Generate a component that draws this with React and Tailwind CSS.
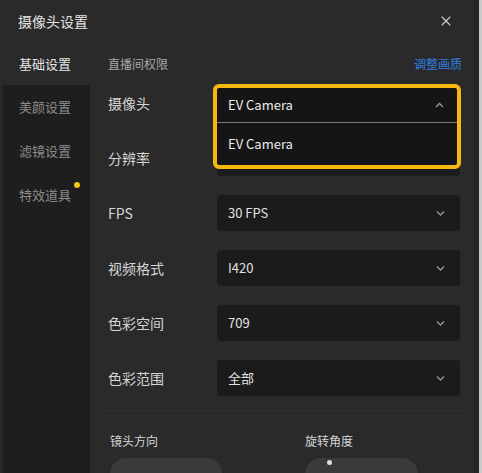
import { X } from "lucide-react";

const font = { fontFamily: '"Noto Sans CJK SC", "Noto Sans", sans-serif' };

const rows = [
  { label: "摄像头", value: "EV Camera", open: true },
  { label: "分辨率", value: "" },
  { label: "FPS", value: "30 FPS" },
  { label: "视频格式", value: "I420" },
  { label: "色彩空间", value: "709" },
  { label: "色彩范围", value: "全部" },
];

function Chevron({ up }) {
  return (
    <svg width="9" height="6" viewBox="0 0 9 6" className="text-[#9a9a9a]">
      <path
        d={up ? "M1 5 L4.5 1.5 L8 5" : "M1 1.5 L4.5 5 L8 1.5"}
        fill="none"
        stroke="currentColor"
        strokeWidth="1.3"
      />
    </svg>
  );
}

function SelectRow({ label, value, open }) {
  return (
    <div className="flex items-center h-9">
      <div className="w-[109px] text-[14px] text-[#d6d6d6]">{label}</div>
      <div className="relative w-[243px] h-9">
        {open ? (
          // opened: the list replaces the closed select
          <div className="absolute left-[-4px] top-[-1px] w-[248px] z-10 border-[4px] border-[#f6b80f] rounded-[6px] bg-[#151515]">
            <div className="h-[34px] flex items-center justify-between pl-[11px] pr-[13px] text-[13px] text-[#ececec]">
              <span>{value}</span>
              <Chevron up />
            </div>
            <div className="h-px bg-[#7a7a7a]" />
            <div className="h-[42px] flex items-center pl-[11px] text-[13px] text-[#ececec]">
              EV Camera
            </div>
          </div>
        ) : (
          <div className="h-9 rounded-[4px] bg-[#1b1b1b] flex items-center justify-between pl-[11px] pr-[15px] text-[13px] text-[#e2e2e2]">
            <span>{value}</span>
            <Chevron />
          </div>
        )}
      </div>
    </div>
  );
}

export default function App() {
  const side = ["基础设置", "美颜设置", "滤镜设置", "特效道具"];
  return (
    <div
      className="w-[482px] h-[473px] overflow-hidden bg-[#2a2a2a] flex"
      style={font}
    >
      <div className="flex-1 flex flex-col min-w-0">
        <div className="h-[42px] shrink-0 flex items-center justify-between pl-[18px] pr-[20px]">
          <span className="text-[14px] text-[#e4e4e4]">摄像头设置</span>
          <X size={16} strokeWidth={1.6} className="text-[#d0d0d0]" />
        </div>
        <div className="flex flex-1 min-h-0">
          <div className="w-[90px] shrink-0 flex flex-col">
            <div className="h-[43px] flex items-center pl-[19px] text-[13px] text-[#e8e8e8]">
              {side[0]}
            </div>
            <div className="flex-1 ml-[3px] bg-[#1e1e1e] flex flex-col">
              {side.slice(1).map((s, i) => (
                <div
                  key={s}
                  className="relative h-[44px] flex items-center pl-[16px] text-[13px] text-[#8c8c8c]"
                >
                  {s}
                  {i === 2 && (
                    <span className="absolute left-[71px] top-[9px] w-[6px] h-[6px] rounded-full bg-[#f5c518]" />
                  )}
                </div>
              ))}
            </div>
          </div>
          <div className="flex-1 pl-[18px] pr-[10px]">
            <div className="h-[21px] mt-[11px] flex items-center justify-between pr-[2px]">
              <span className="text-[12px] text-[#a8a8a8]">直播间权限</span>
              <span className="text-[12px] text-[#2f7fe0]">调整画质</span>
            </div>
            <div className="mt-[11px] flex flex-col gap-[19px]">
              {rows.map((r) => (
                <SelectRow key={r.label} {...r} />
              ))}
            </div>
            <div className="mt-[14px] ml-[-3px] h-px bg-[#323232]" />
            <div className="mt-[21px] flex pl-[2px]">
              <div className="w-[195px]">
                <div className="text-[12px] text-[#d6d6d6]">镜头方向</div>
                <div className="mt-[8px] w-[112px] h-[32px] rounded-full bg-[#3a3a3a]" />
              </div>
              <div>
                <div className="text-[12px] text-[#d6d6d6]">旋转角度</div>
                <div className="mt-[8px] w-[113px] h-[32px] rounded-full bg-[#3a3a3a] flex items-start pl-[22px] pt-[2px]">
                  <span className="w-[5px] h-[5px] rounded-full bg-[#ddd]" />
                </div>
              </div>
            </div>
          </div>
        </div>
      </div>
      <div className="w-[5px] bg-[#252525]" />
      <div className="w-[3px] bg-[#c9c9c9]" />
    </div>
  );
}
